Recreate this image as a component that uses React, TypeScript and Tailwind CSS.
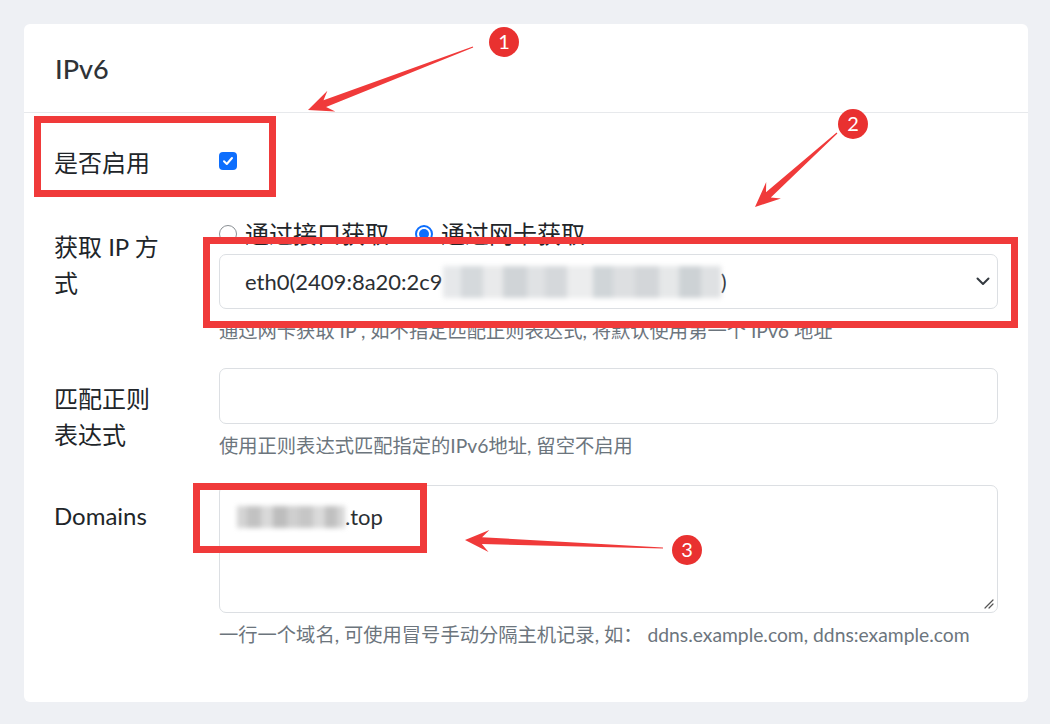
import React from "react";

function arrowPoints(
  tx: number,
  ty: number,
  hx: number,
  hy: number,
  headLen = 23,
  headW = 11,
  shaftW = 3.6,
  tailW = 0.6
): string {
  const dx = hx - tx;
  const dy = hy - ty;
  const L = Math.sqrt(dx * dx + dy * dy);
  const ux = dx / L;
  const uy = dy / L;
  const px = -uy;
  const py = ux;
  const at = (d: number, w: number) =>
    `${(tx + ux * d + px * w).toFixed(1)},${(ty + uy * d + py * w).toFixed(1)}`;
  const base = L - headLen;
  return [
    at(0, tailW),
    at(base + 5, shaftW),
    at(base - 2, headW),
    at(L, 0),
    at(base - 2, -headW),
    at(base + 5, -shaftW),
    at(0, -tailW),
  ].join(" ");
}

function Blur({ widths, colors, h }: { widths: number[]; colors: string[]; h: number }) {
  return (
    <span className="inline-flex align-middle blur-[2.5px]" style={{ height: h }}>
      {widths.map((w, i) => (
        <span key={i} style={{ width: w, background: colors[i % colors.length] }} className="h-full" />
      ))}
    </span>
  );
}

export default function App() {
  const red = "#f03a3a";
  return (
    <div className="relative min-h-screen bg-[#eef0f4] pb-6 pl-6 pr-[22px] pt-6 font-['Lato','Noto_Sans_CJK_SC',sans-serif] text-[#212529]">
      <div className="h-[678px] rounded-[6px] bg-white">
        <div className="flex h-[89px] items-center border-b border-[#e7e9ec] px-[31px] pt-[3px]">
          <span className="text-[27px] font-medium text-[#2f3337]">IPv6</span>
        </div>

        <div className="pl-[30px] pr-[30px] pt-[19px]">
          {/* Row 1 */}
          <div className="grid grid-cols-[165px_1fr]">
            <div className="py-[13px] text-[24px] leading-[36px]">是否启用</div>
            <div className="flex items-center pb-[4px]">
              <div className="flex h-[18px] w-[18px] items-center justify-center rounded-[4px] bg-[#0d6efd]">
                <svg width="12" height="12" viewBox="0 0 12 12">
                  <path d="M2 6.3 L4.8 9 L10 3" fill="none" stroke="white" strokeWidth="2" strokeLinecap="round" strokeLinejoin="round" />
                </svg>
              </div>
            </div>
          </div>

          {/* Row 2 */}
          <div className="mt-[22px] grid grid-cols-[165px_1fr]">
            <div className="w-[112px] pt-[13px] text-[24px] leading-[36px]">获取 IP 方式</div>
            <div>
              <div className="flex h-[38px] items-center pb-[2px] text-[24px]">
                <span className="h-[18px] w-[18px] rounded-full border border-[#8a8f94] bg-white" />
                <span className="ml-[8px]">通过接口获取</span>
                <span className="ml-[26px] flex h-[18px] w-[18px] items-center justify-center rounded-full border-2 border-[#0d6efd] bg-white">
                  <span className="h-[10px] w-[10px] rounded-full bg-[#0d6efd]" />
                </span>
                <span className="ml-[8px]">通过网卡获取</span>
              </div>
              <div className="flex h-[55px] items-center justify-between rounded-[7px] border border-[#dcdfe3] pl-[25px] pr-[7px] text-[22px] text-[#2b2f33]">
                <span className="flex items-center whitespace-nowrap">
                  eth0(2409:8a20:2c9
                  <Blur
                    h={32}
                    widths={[18, 22, 20, 24, 18, 22, 26, 20, 22, 24, 20, 22, 20]}
                    colors={["#e6e8ea", "#d5d9dc", "#e9eaeb", "#d0d4d7", "#e0e2e4", "#d5d8db", "#ecedee", "#d0d5d8", "#dddfe1", "#d3d6d9", "#e6e8e9", "#cdd2d5", "#dfe1e3"]}
                  />
                  )
                </span>
                <svg width="14" height="9" viewBox="0 0 14 9">
                  <path d="M1.5 1.5 L7 7 L12.5 1.5" fill="none" stroke="#343a40" strokeWidth="2" strokeLinecap="round" strokeLinejoin="round" />
                </svg>
              </div>
              <div className="mt-[8px] text-[19.3px] leading-[28px] text-[#6c757d]">
                通过网卡获取 IP , 如不指定匹配正则表达式, 将默认使用第一个 IPv6 地址
              </div>
            </div>
          </div>

          {/* Row 3 */}
          <div className="mt-[23px] grid grid-cols-[165px_1fr]">
            <div className="w-[112px] pt-[13px] text-[24px] leading-[36px]">匹配正则表达式</div>
            <div>
              <div className="h-[56px] rounded-[7px] border border-[#dcdfe3]" />
              <div className="mt-[8px] text-[19.3px] leading-[28px] text-[#6c757d]">
                使用正则表达式匹配指定的IPv6地址, 留空不启用
              </div>
            </div>
          </div>

          {/* Row 4 */}
          <div className="mt-[25px] grid grid-cols-[165px_1fr]">
            <div className="pt-[13px] text-[24px] leading-[36px]">Domains</div>
            <div>
              <div className="relative h-[128px] rounded-[7px] border border-[#dcdfe3] pl-[17px] pt-[14px] text-[22px] leading-[33px] text-[#2b2f33]">
                <span className="flex items-center">
                  <Blur
                    h={22}
                    widths={[10, 14, 12, 14, 12, 14, 12, 12, 8]}
                    colors={["#d4d4d4", "#c2c2c2", "#d9d9d9", "#bdbdbd", "#cfcfcf", "#c6c6c6", "#dadada", "#c0c0c0", "#d6d6d6"]}
                  />
                  .top
                </span>
                <svg className="absolute bottom-[3px] right-[3px]" width="11" height="11" viewBox="0 0 11 11">
                  <path d="M10 2 L2 10 M10 6 L6 10" stroke="#555" strokeWidth="1.2" strokeLinecap="round" />
                </svg>
              </div>
              <div className="mt-[8px] whitespace-nowrap text-[19.3px] leading-[28px] text-[#6c757d]">
                一行一个域名, 可使用冒号手动分隔主机记录, 如：&nbsp;ddns.example.com, ddns:example.com
              </div>
            </div>
          </div>
        </div>
      </div>

      {/* annotation overlay */}
      <svg className="pointer-events-none absolute left-0 top-0" width="1050" height="724" viewBox="0 0 1050 724">
        <rect x="37.5" y="119.5" width="235" height="74" fill="none" stroke={red} strokeWidth="7" />
        <rect x="206.5" y="240.5" width="808" height="84" fill="none" stroke={red} strokeWidth="7" />
        <rect x="196.5" y="486.5" width="227" height="63" fill="none" stroke={red} strokeWidth="7" />

        <polygon points={arrowPoints(473, 47, 308, 110)} fill={red} />
        <polygon points={arrowPoints(837, 133, 755, 207)} fill={red} />
        <polygon points={arrowPoints(663, 548, 465, 540, 22, 11, 3.4, 0.6)} fill={red} />

        <circle cx="504" cy="42" r="15" fill="#e93130" />
        <circle cx="853" cy="124" r="15" fill="#e93130" />
        <circle cx="687" cy="550" r="15" fill="#e93130" />
        <text x="504" y="49" textAnchor="middle" fill="white" fontSize="20" fontFamily="Lato, sans-serif">1</text>
        <text x="853" y="131" textAnchor="middle" fill="white" fontSize="20" fontFamily="Lato, sans-serif">2</text>
        <text x="687" y="557" textAnchor="middle" fill="white" fontSize="20" fontFamily="Lato, sans-serif">3</text>
      </svg>
    </div>
  );
}
